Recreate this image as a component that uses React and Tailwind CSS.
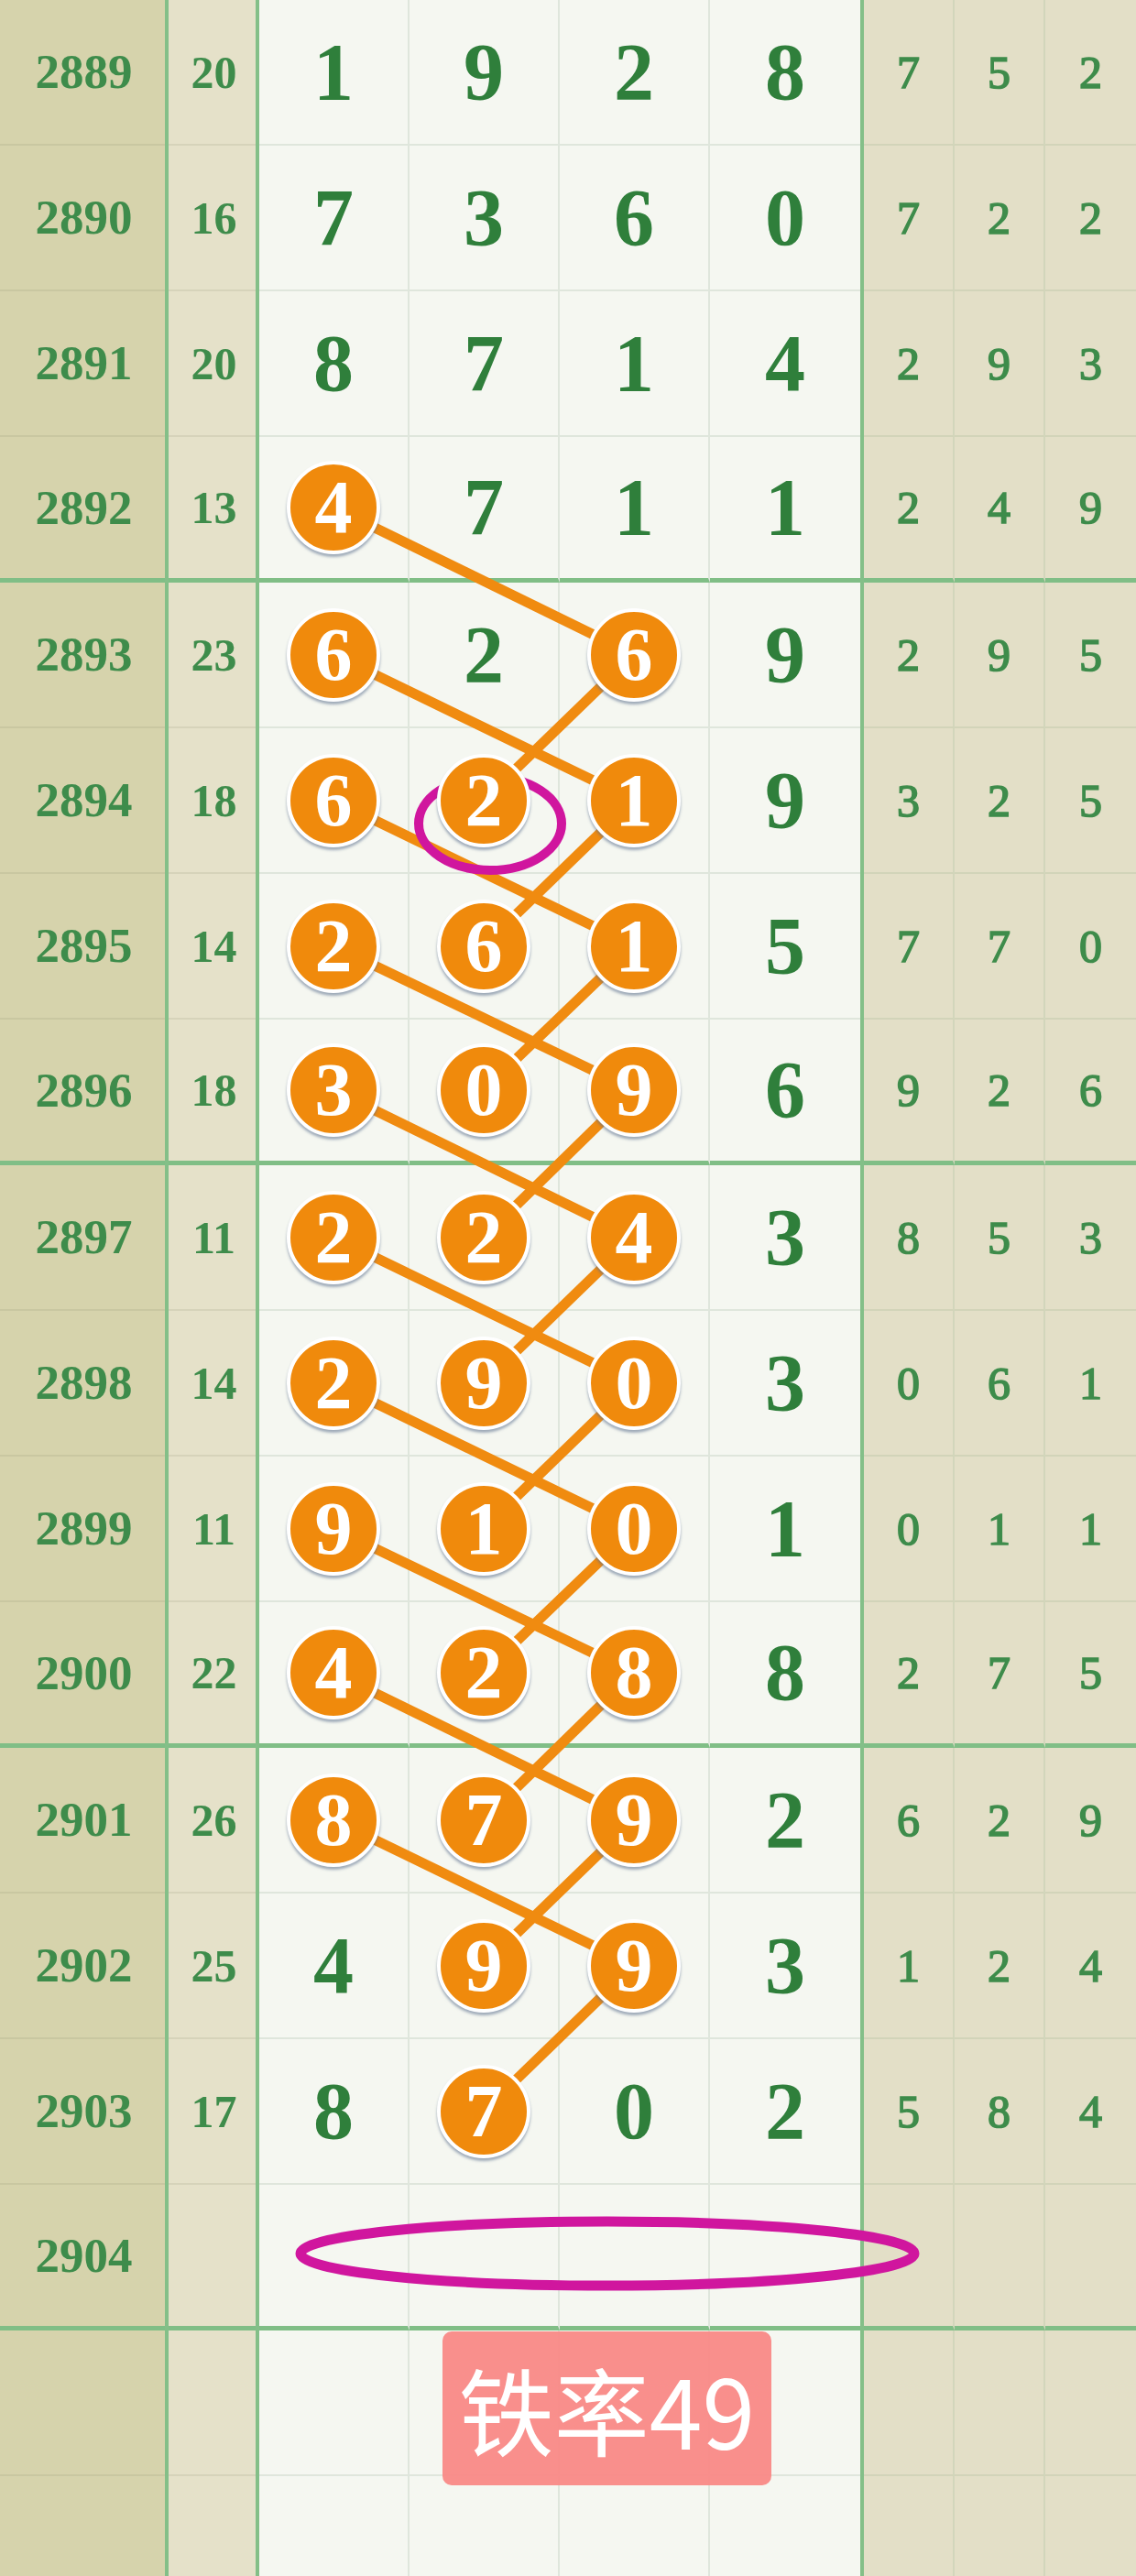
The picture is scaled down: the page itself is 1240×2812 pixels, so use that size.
import React from "react";

const ROW_H = 159;
const rows = [
  [2889, 20, [1, 9, 2, 8], [7, 5, 2]],
  [2890, 16, [7, 3, 6, 0], [7, 2, 2]],
  [2891, 20, [8, 7, 1, 4], [2, 9, 3]],
  [2892, 13, [4, 7, 1, 1], [2, 4, 9]],
  [2893, 23, [6, 2, 6, 9], [2, 9, 5]],
  [2894, 18, [6, 2, 1, 9], [3, 2, 5]],
  [2895, 14, [2, 6, 1, 5], [7, 7, 0]],
  [2896, 18, [3, 0, 9, 6], [9, 2, 6]],
  [2897, 11, [2, 2, 4, 3], [8, 5, 3]],
  [2898, 14, [2, 9, 0, 3], [0, 6, 1]],
  [2899, 11, [9, 1, 0, 1], [0, 1, 1]],
  [2900, 22, [4, 2, 8, 8], [2, 7, 5]],
  [2901, 26, [8, 7, 9, 2], [6, 2, 9]],
  [2902, 25, [4, 9, 9, 3], [1, 2, 4]],
  [2903, 17, [8, 7, 0, 2], [5, 8, 4]],
  [2904, "", [null, null, null, null], [null, null, null]],
];

const isBall = (i, c) =>
  (c === 0 && i >= 3 && i <= 12) ||
  (c === 2 && i >= 4 && i <= 13) ||
  (c === 1 && i >= 5 && i <= 14);

const cy = (i) => i * ROW_H + (ROW_H - ((i + 1) % 4 === 0 ? 5 : 2)) / 2;
const cx = (c) => 283 + 164 * c + 81;

const serif = { fontFamily: '"Liberation Serif", "Times New Roman", serif' };

function VLine() {
  return <div className="w-[4px] shrink-0 bg-[#84bf88]" />;
}

function Ball({ n }) {
  return (
    <div className="relative z-10 w-[102px] h-[102px] rounded-full bg-[#f08a0c] border-[4px] border-white shadow-[0_3px_3px_rgba(90,110,140,0.55)] flex items-center justify-center">
      <span className="text-white font-bold text-[82px] leading-none" style={serif}>
        {n}
      </span>
    </div>
  );
}

function Row({ i, data }) {
  const thick = (i + 1) % 4 === 0;
  const [issue, sum, main, right] = data;
  const b0 = thick ? "border-b-[5px] border-[#80be86]" : "border-b-2 border-[#c9c7a1]";
  const b1 = thick ? "border-b-[5px] border-[#80be86]" : "border-b-2 border-[#d6d3ba]";
  const bm = thick ? "border-b-[5px] border-b-[#80be86]" : "border-b-2 border-b-[#dfe6dc]";
  const br = thick ? "border-b-[5px] border-b-[#80be86]" : "border-b-2 border-b-[#d2d4b9]";
  return (
    <div className="flex h-[159px]">
      <div className={`w-[180px] shrink-0 bg-[#d6d3ac] flex items-center justify-center ${b0}`}>
        <span className="text-[53px] font-bold leading-none text-[#3e8c4b] pl-[3px]" style={serif}>
          {issue}
        </span>
      </div>
      <VLine />
      <div className={`w-[95px] shrink-0 bg-[#e5e1c9] flex items-center justify-center ${b1}`}>
        <span className="text-[50px] font-bold leading-none text-[#3e8c4b] pl-[4px]" style={serif}>
          {sum}
        </span>
      </div>
      <VLine />
      {main.map((d, c) => (
        <div
          key={c}
          className={`w-[164px] shrink-0 bg-[#f5f7f1] flex items-center justify-center ${bm} ${
            c < 3 ? "border-r-2 border-r-[#dfe6dc]" : ""
          }`}
        >
          {d === null ? null : isBall(i, c) ? (
            <Ball n={d} />
          ) : (
            <span className="text-[88px] font-bold leading-none text-[#2f7f3b]" style={serif}>
              {d}
            </span>
          )}
        </div>
      ))}
      <VLine />
      {right.map((d, c) => (
        <div
          key={c}
          className={`w-[99px] shrink-0 bg-[#e3dfc7] flex items-center justify-center ${br} ${
            c < 2 ? "border-r-2 border-r-[#d2d6bb]" : ""
          }`}
        >
          <span
            className="text-[50px] leading-none text-[#3e8c4b] [-webkit-text-stroke:1.6px_#3e8c4b]"
            style={serif}
          >
            {d}
          </span>
        </div>
      ))}
    </div>
  );
}

function EmptyRow({ h, line }) {
  const b0 = line ? "border-b-2 border-[#c9c7a1]" : "";
  const b1 = line ? "border-b-2 border-[#d6d3ba]" : "";
  const bm = line ? "border-b-2 border-b-[#dfe6dc]" : "";
  const br = line ? "border-b-2 border-b-[#d2d4b9]" : "";
  return (
    <div className={`flex ${h}`}>
      <div className={`w-[180px] shrink-0 bg-[#d6d3ac] ${b0}`} />
      <VLine />
      <div className={`w-[95px] shrink-0 bg-[#e5e1c9] ${b1}`} />
      <VLine />
      {[0, 1, 2, 3].map((c) => (
        <div
          key={c}
          className={`w-[164px] shrink-0 bg-[#f5f7f1] ${bm} ${c < 3 ? "border-r-2 border-r-[#dfe6dc]" : ""}`}
        />
      ))}
      <VLine />
      {[0, 1, 2].map((c) => (
        <div
          key={c}
          className={`w-[99px] shrink-0 bg-[#e3dfc7] ${br} ${c < 2 ? "border-r-2 border-r-[#d2d6bb]" : ""}`}
        />
      ))}
    </div>
  );
}

export default function App() {
  const segs = [];
  for (let i = 3; i <= 12; i++) {
    segs.push([cx(0), cy(i), cx(2), cy(i + 1)]);
    segs.push([cx(2), cy(i + 1), cx(1), cy(i + 2)]);
  }
  return (
    <div className="relative w-[1240px] h-[2812px] overflow-hidden bg-[#f5f7f1]">
      {rows.map((r, i) => (
        <Row key={i} i={i} data={r} />
      ))}
      <EmptyRow h="h-[159px]" line />
      <EmptyRow h="h-[109px]" />

      <svg
        className="absolute left-0 top-0 z-[5] pointer-events-none"
        width="1240"
        height="2812"
        viewBox="0 0 1240 2812"
      >
        {segs.map(([x1, y1, x2, y2], k) => (
          <line key={k} x1={x1} y1={y1} x2={x2} y2={y2} stroke="#f08b10" strokeWidth="11" />
        ))}
        <ellipse cx="535" cy="899" rx="78" ry="51" fill="none" stroke="#d0169e" strokeWidth="10" />
        <ellipse cx="663" cy="2460" rx="335" ry="35" fill="none" stroke="#d0169e" strokeWidth="11" />
      </svg>

      <div className="absolute left-[483px] top-[2545px] z-10 w-[359px] h-[168px] rounded-[10px] bg-[#f98986]/95 flex items-center justify-center">
        <span
          className="text-white text-[104px] leading-none"
          style={{ fontFamily: '"Noto Sans CJK SC", "Noto Sans", sans-serif' }}
        >
          铁率49
        </span>
      </div>
    </div>
  );
}
